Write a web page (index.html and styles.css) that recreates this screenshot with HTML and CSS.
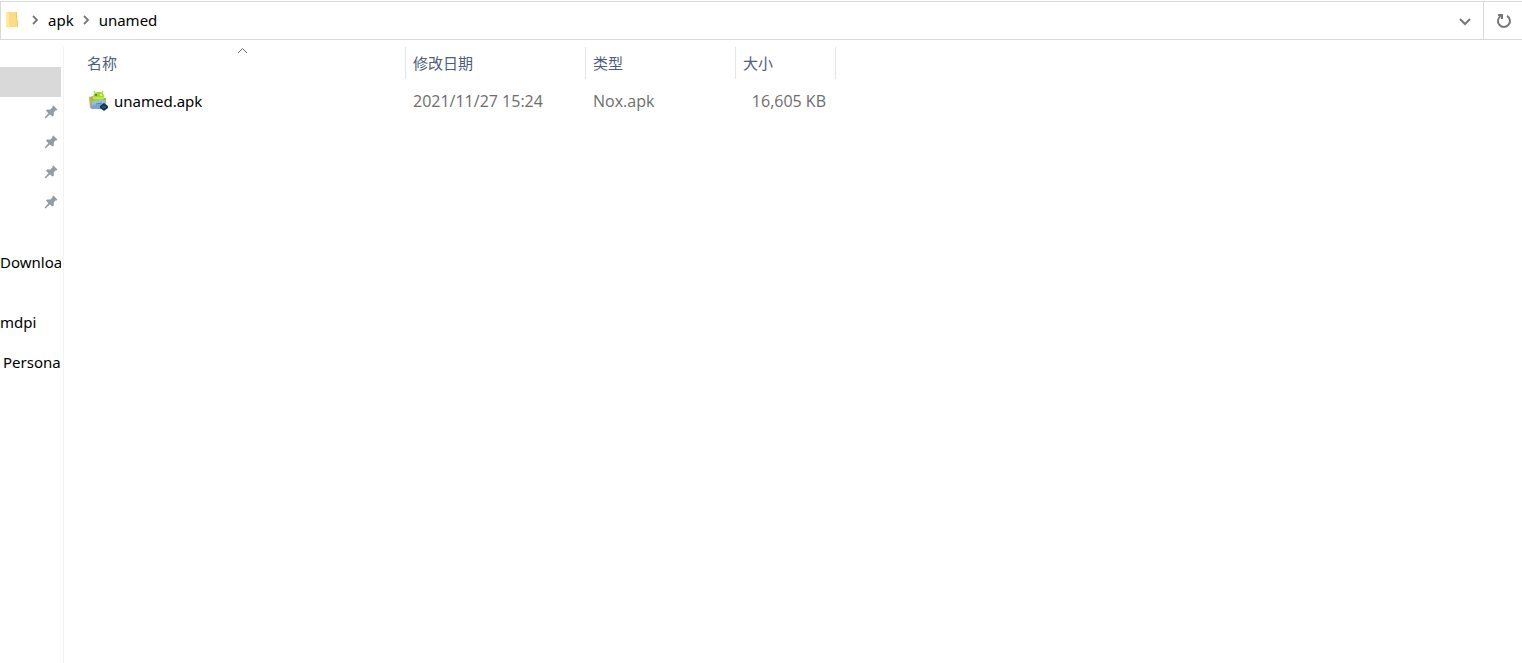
FILE: index.html
```
<!doctype html>
<html lang="zh-CN">

<head>
    <meta charset="utf-8">
    <meta name="viewport" content="width=device-width, initial-scale=1">
    <title>unamed</title>

    <link rel="stylesheet" href="styles.css">
</head>

<body>
    <svg class="symbols" aria-hidden="true">
        <symbol id="pin" viewBox="0 0 14 14">
            <path d="M9.4 .6 L13.4 4.4 L12.6 5.6 L11.4 5.6 L9.8 7.6 L9.8 10.6 L8.6 11.4 L5.8 9.4 L1.6 13.4 L.6 12.6 L4.4 8.2 L2 5.8 L3 4.4 L6.4 4.4 L8.4 2.6 L8.4 1.4 Z" fill="#919ca5" />
        </symbol>
        <symbol id="arrow" viewBox="0 0 8 10">
            <path d="M2 1 L6 5 L2 9" fill="none" stroke="#777" stroke-width="1.8" />
        </symbol>
    </svg>

    <header class="address_bar">
        <nav class="path">
            <svg class="folder" viewBox="0 0 13 18">
                <path d="M1 1 H11 V9 L12 10 V16 H1 Z" fill="#fbdc82" />
                <path d="M0 1 H1 L3 3 V17.5 L0 16 Z" fill="#ffe9a2" />
                <path d="M10 1 H11 V9 L12 10 V16 H11 V10 L10 9 Z" fill="#f0cb69" />
            </svg>
            <svg class="arrow"><use href="#arrow" /></svg>
            <a href="#">apk</a>
            <svg class="arrow"><use href="#arrow" /></svg>
            <a href="#">unamed</a>
        </nav>
        <button class="history" aria-label="History">
            <svg width="14" height="10" viewBox="0 0 14 10">
                <path d="M2 3 L7 8 L12 3" fill="none" stroke="#777" stroke-width="2" />
            </svg>
        </button>
        <button class="refresh" aria-label="Refresh">
            <svg width="16" height="16" viewBox="0 0 16 16">
                <path d="M11 2.800 A6 6 0 1 1 4.600 3" fill="none" stroke="#777" stroke-width="2" />
                <path d="M2 2 H6 V6" fill="none" stroke="#777" stroke-width="2" />
            </svg>
        </button>
    </header>

    <div class="container">
        <aside class="sidebar">
            <ul>
                <li class="selected"></li>
                <li class="pinned"><svg class="pin"><use href="#pin" /></svg></li>
                <li class="pinned"><svg class="pin"><use href="#pin" /></svg></li>
                <li class="pinned"><svg class="pin"><use href="#pin" /></svg></li>
                <li class="pinned"><svg class="pin"><use href="#pin" /></svg></li>
                <li></li>
                <li>Downloa</li>
                <li></li>
                <li>mdpi</li>
            </ul>
            <ul class="drive">
                <li>Persona</li>
            </ul>
        </aside>

        <main class="files">
            <table>
                <thead>
                    <tr>
                        <th class="name">
                            名称
                            <svg class="sort" viewBox="0 0 11 7">
                                <path d="M1 6 L5.5 1.5 L10 6" fill="none" stroke="#666" stroke-width="1" />
                            </svg>
                        </th>
                        <th class="date">修改日期</th>
                        <th class="type">类型</th>
                        <th class="size">大小</th>
                    </tr>
                </thead>
                <tbody>
                    <tr>
                        <td class="name">
                            <div class="file">
                                <svg class="apk" viewBox="0 0 20 20">
                                    <path d="M0 6 L4 5 L5 18 L1 17 Z" fill="#d9a548" />
                                    <path d="M5 0 L7 3 M14 0 L12 3" stroke="#8fc31b" stroke-width="1" />
                                    <path d="M4 7 C4 3 6 1 10 1 C14 1 15 3 15 7 V11 H4 Z" fill="#a4d62a" />
                                    <path d="M2 7 H5 V12 H2 Z M14 7 H17 V12 H14 Z" fill="#93cb22" />
                                    <path d="M4 7 H15" stroke="#d8f093" stroke-width="1" />
                                    <circle cx="7" cy="4" r="1" fill="#47741a" />
                                    <circle cx="12" cy="4" r="1" fill="#e9f7c4" />
                                    <path d="M2 10 H8 L10 9 H17 L16 18 H3 L2 17 Z" fill="#79a5d5" />
                                    <path d="M2 10 H8 L10 9 H17 L16 12 L3 14 Z" fill="#9abce0" />
                                    <path d="M7 13 L13 12" stroke="#587fae" stroke-width="1" />
                                    <path d="M15 12 L19 15 V17 L15 20 L11 17 V15 Z" fill="#17344b" />
                                    <path d="M13 16 H17" stroke="#3d7c9d" stroke-width="1" />
                                </svg>
                                <span>unamed.apk</span>
                            </div>
                        </td>
                        <td>2021/11/27 15:24</td>
                        <td>Nox.apk</td>
                        <td class="size">16,605 KB</td>
                    </tr>
                </tbody>
            </table>
        </main>
    </div>
</body>

</html>
```
FILE: styles.css
```
* {
    box-sizing: border-box;
}

body {
    font-family: "Noto Sans", "Noto Sans CJK SC", sans-serif;
    font-size: 15px;
    line-height: 30px;
    color: #000;
    background-color: #fff;
    margin: 0;
    padding-top: 1px;
    display: flex;
    flex-direction: column;
    min-height: 100vh;
}

.symbols {
    position: absolute;
    width: 0;
    height: 0;
}

/* Address bar */
.address_bar {
    display: flex;
    height: 39px;
    border: 1px solid #d9d9d9;
    border-right: none;
}

.path {
    flex: 1;
    display: flex;
    align-items: center;
    padding: 0 0 2px 5px;
}

.path a {
    color: #000;
    text-decoration: none;
}

.folder {
    width: 13px;
    height: 18px;
    margin-right: 4px;
}

.arrow {
    width: 8px;
    height: 10px;
    margin: 0 9px 0 8px;
}

.address_bar button {
    display: flex;
    align-items: center;
    justify-content: center;
    width: 36px;
    padding: 0;
    border: none;
    background: none;
}

.address_bar .refresh {
    width: 39px;
    padding-left: 2px;
    border-left: 1px solid #d9d9d9;
}

/* Navigation pane and file list */
.container {
    flex: 1;
    display: flex;
    padding-top: 7px;
}

.sidebar {
    width: 64px;
    padding: 20px 2px 0 0;
    border-right: 1px solid #f3f3f3;
}

.sidebar ul {
    list-style: none;
    margin: 0;
    padding: 0;
}

.sidebar li {
    height: 30px;
    overflow: hidden;
    white-space: nowrap;
}

.sidebar .selected {
    background-color: #d9d9d9;
}

.sidebar .pinned {
    display: flex;
    align-items: center;
    justify-content: flex-end;
    padding-right: 3px;
}

.pin {
    width: 14px;
    height: 14px;
}

.sidebar .drive {
    margin-top: 10px;
    padding-left: 3px;
}

.files {
    flex: 1;
}

table {
    table-layout: fixed;
    width: 772px;
    border-collapse: separate;
    border-spacing: 0;
}

th {
    position: relative;
    height: 32px;
    padding: 0 7px;
    border-right: 1px solid #e5e5e5;
    color: #4c607a;
    font-weight: normal;
    text-align: left;
}

td {
    height: 44px;
    padding: 0 7px;
    color: #6d6d6d;
    font-family: "Open Sans", sans-serif;
    font-size: 16px;
}

th.name {
    width: 342px;
    padding-left: 23px;
}

th.date {
    width: 180px;
}

th.type {
    width: 150px;
}

th.size {
    width: 100px;
}

td.name {
    padding-left: 25px;
    color: #000;
    font-family: "Noto Sans", sans-serif;
    font-size: 15px;
}

td.size {
    padding-right: 10px;
    text-align: right;
}

.sort {
    position: absolute;
    top: 0;
    right: 157px;
    width: 11px;
    height: 7px;
}

.file {
    display: flex;
    align-items: center;
    gap: 5px;
}

.apk {
    width: 20px;
    height: 20px;
}
```
